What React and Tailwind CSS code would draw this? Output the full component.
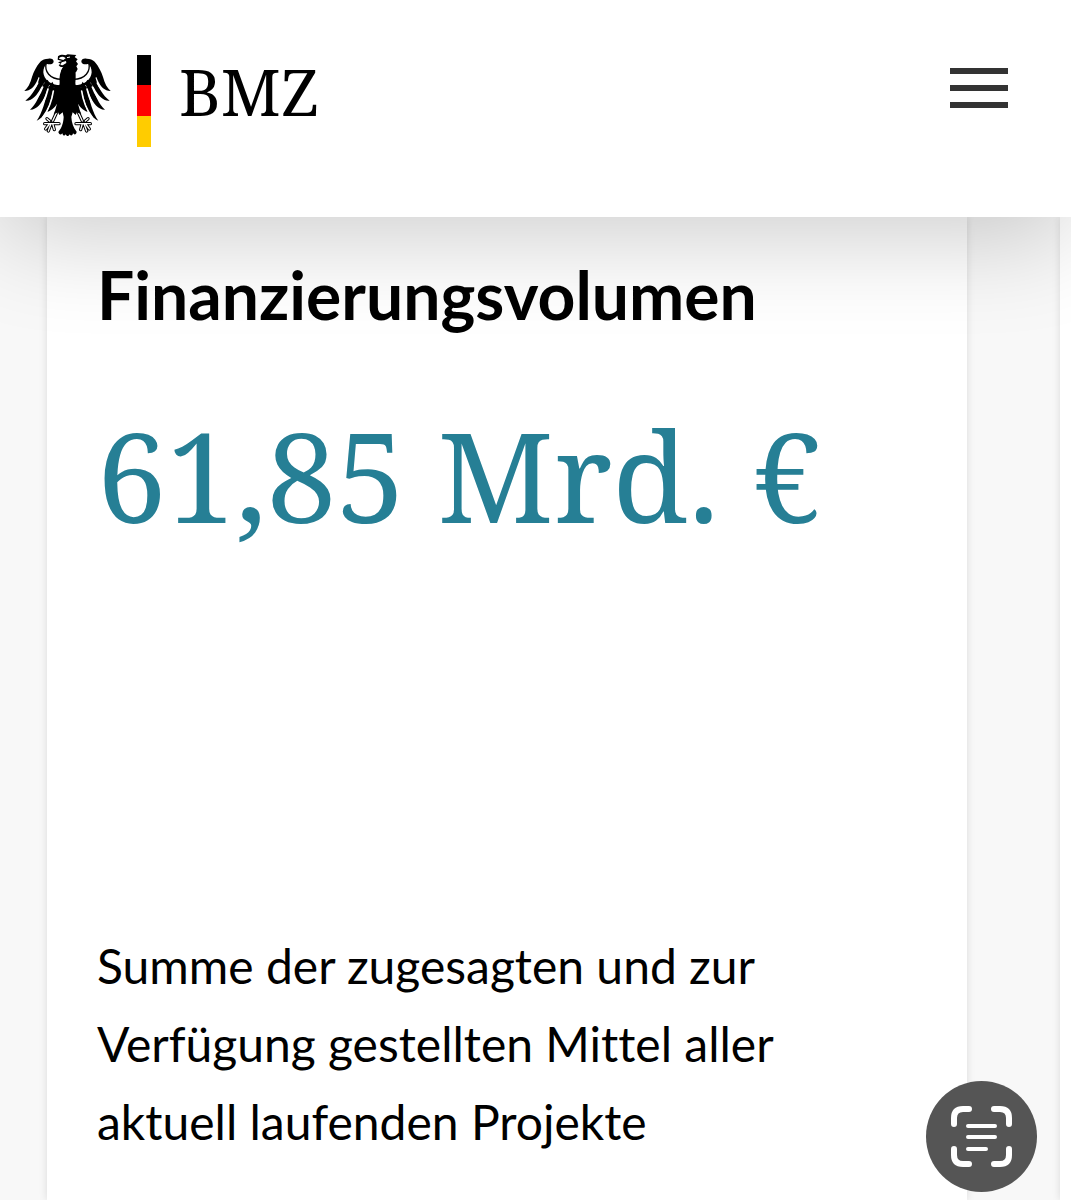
import React from 'react'

const Wing = () => (
  <>
    {/* arm and outer feather */}
    <path d="M214 62 C214 55 221 51 230 53 C240 53 248 56 254 62 C266 76 274 92 279 108 C284 128 292 142 302 150 C286 151 272 138 264 120 L259 108 L250 116 L240 126 L190 150 L190 133 C222 134 244 116 245 94 C245 82 241 74 235 68 C226 72 216 70 214 62 Z" />
    {/* inner rim of the wing */}
    <path d="M236 64 C243 92 226 114 190 115" fill="none" stroke="#000" strokeWidth="4" />
    {/* feathers */}
    <path d="M246 100 L257 112 C264 138 278 164 299 179 C281 182 264 164 253 142 L240 122 Z" />
    <path d="M232 116 L247 132 C254 162 267 190 285 206 C266 207 249 188 239 162 L226 128 Z" />
    <path d="M218 122 L233 143 C237 178 249 216 265 239 C246 233 230 206 223 178 L212 134 Z" />
    <path d="M190 130 L216 140 C218 166 224 192 233 213 C218 208 208 196 201 184 L186 190 Z" />
    {/* gaps between the feathers */}
    <g fill="none" stroke="#fff" strokeWidth="5" strokeLinecap="round">
      <path d="M262 126 C268 140 280 154 296 161" />
      <path d="M247 138 C255 160 268 180 286 191" />
      <path d="M231 144 C237 170 250 198 268 216" />
      <path d="M215 150 C219 178 230 206 246 228" />
    </g>
  </>
)

const Claw = () => (
  <g fill="none" strokeLinecap="round" strokeLinejoin="round">
    <path d="M206 216 L217 240 M198 248 H241 M217 248 L212 266 M222 248 L230 270 M226 240 L234 233 M227 249 L238 264" stroke="#000" strokeWidth="10" />
    <path d="M206 216 L217 240 M198 248 H241 M217 248 L212 266 M222 248 L230 270 M226 240 L234 233 M227 249 L238 264" stroke="#fff" strokeWidth="4" />
  </g>
)

const Eagle = () => (
  <svg viewBox="36 33 273 261" className="h-[87px] w-[91px]" aria-hidden="true">
    <Claw />
    <g transform="translate(345 0) scale(-1 1)">
      <Claw />
    </g>
    <Wing />
    <g transform="translate(345 0) scale(-1 1)">
      <Wing />
    </g>
    {/* body and tail */}
    <path d="M160 76 C150 92 147 108 149 126 L144 160 C143 184 138 204 131 220 L144 214 L148 222 L158 214 L161 228 C160 246 156 260 145 273 C147 281 152 283 157 277 C159 285 164 286 167 280 C170 287 176 287 179 280 C183 286 188 284 189 277 C194 283 199 280 200 272 C190 260 185 246 184 228 L188 214 L197 222 L201 214 L214 220 C207 204 202 184 201 160 L196 126 C198 110 197 92 195 76 Z" />
    {/* head */}
    <path d="M144 46 C152 40 161 41 167 43 L173 40 L199 42 L194 48 L203 55 L198 61 L204 69 L199 76 L203 84 L198 94 L153 94 C153 86 158 82 162 77 C155 80 148 77 146 72 L152 68 L144 64 L156 60 L143 56 Z" />
    <path d="M148 50 C155 46 162 47 167 52 L160 57 L147 53 Z M155 64 L168 60 L169 66 L158 73 L151 72 Z" fill="#fff" />
    <path d="M171 50 L180 48" stroke="#fff" strokeWidth="3" />
  </svg>
)

const Header = () => (
  <header className="relative z-10 flex items-start justify-between bg-white pt-[52px] pr-[63px] pb-[70px] pl-[22px] shadow-[0_20px_100px_rgba(0,0,0,0.2)]">
    <a href="#start" className="flex items-start" aria-label="BMZ Startseite">
      <Eagle />
      <span className="mt-[3px] ml-6 flex w-[14px] flex-col">
        <span className="h-[30px] bg-black"></span>
        <span className="h-[31px] bg-[#ff0000]"></span>
        <span className="h-[31px] bg-[#ffcc00]"></span>
      </span>
      <span className="ml-7 font-['Noto_Serif','Liberation_Serif',serif] text-[64px] leading-[80px] text-black">BMZ</span>
    </a>
    <button type="button" aria-label="Menü" className="mt-4 flex w-[58px] flex-col gap-[11px]">
      <span className="h-[6px] w-full bg-[#333]"></span>
      <span className="h-[6px] w-full bg-[#333]"></span>
      <span className="h-[6px] w-full bg-[#333]"></span>
    </button>
  </header>
)

const App = () => {
  return (
    <div className="flex min-h-screen flex-col overflow-hidden bg-[#f8f8f8] font-['Lato',sans-serif] text-black">
      <Header />

      <main className="flex grow gap-[93px] pl-[47px]">
        <section className="w-[calc(100%-104px)] shrink-0 bg-white px-[50px] pt-9 shadow-[0_0_8px_rgba(0,0,0,0.12)]">
          <h2 className="text-[66px] leading-[84px] font-bold">Finanzierungsvolumen</h2>
          <p className="mt-[58px] font-['Noto_Serif','Liberation_Serif',serif] text-[124px] leading-[160px] text-[#267f95]">61,85 Mrd. €</p>
          <p className="mt-[372px] max-w-[760px] text-[48px] leading-[78px] [font-variant-ligatures:none]">
            Summe der zugesagten und zur Verfügung gestellten Mittel aller aktuell laufenden Projekte
          </p>
        </section>
        <section className="w-[calc(100%-104px)] shrink-0 bg-white shadow-[0_0_8px_rgba(0,0,0,0.12)]"></section>
      </main>

      {/* Text scan button */}
      <button type="button" aria-label="Text scannen" className="fixed right-[34px] bottom-2 z-20 flex size-[111px] items-center justify-center rounded-full bg-[#555]">
        <svg viewBox="0 0 62 62" className="size-[62px]" fill="none" stroke="#fff" strokeLinecap="round">
          <path strokeWidth="6" d="M3 18 V12 Q3 3 12 3 H18 M43 3 H49 Q58 3 58 12 V18 M58 43 V49 Q58 58 49 58 H43 M18 58 H12 Q3 58 3 49 V43" />
          <path strokeWidth="4" d="M17 20 H44 M17 31 H44 M17 43 H35" />
        </svg>
      </button>
    </div>
  )
}

export default App
